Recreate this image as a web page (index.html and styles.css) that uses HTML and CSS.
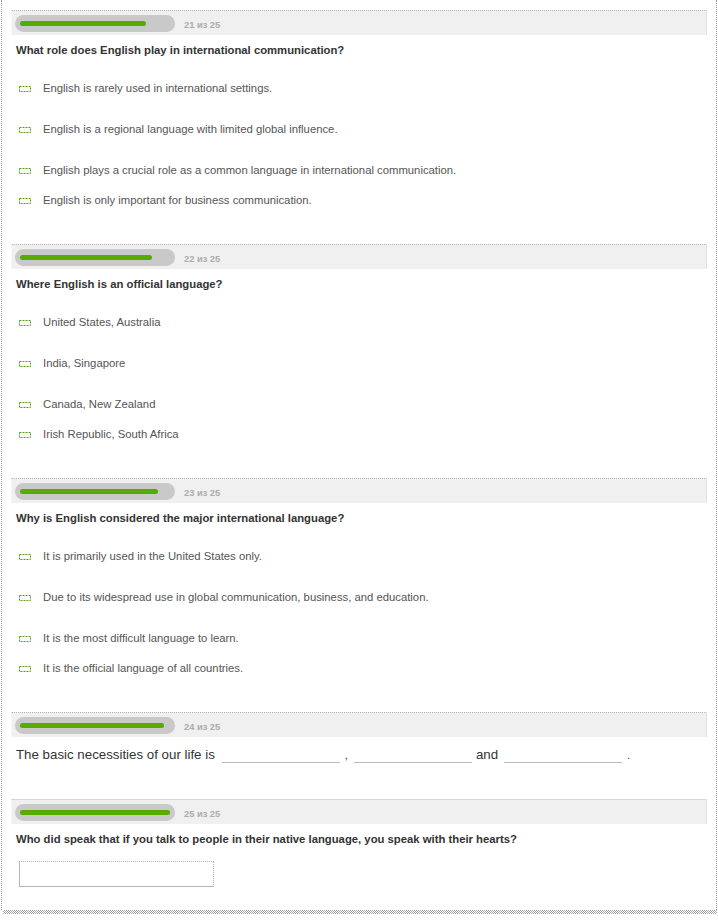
FILE: index.html
```html
<!DOCTYPE html>
<html>
<head>
<meta charset="utf-8">
<link rel="stylesheet" href="styles.css">
</head>
<body>
<div class="page">
  <div class="quiz">
    <section class="task">
      <div class="bar"><div class="track"><div class="fill" style="width:126px"></div></div><span class="count">21 из 25</span></div>
      <p class="q">What role does English play in international communication?</p>
      <ul class="opts">
        <li><svg class="ico" viewBox="0 0 12 6"><rect x="0.5" y="0.5" width="11" height="5" fill="none" stroke="#5a9e12" stroke-dasharray="2 1"/></svg>English is rarely used in international settings.</li>
        <li><svg class="ico" viewBox="0 0 12 6"><rect x="0.5" y="0.5" width="11" height="5" fill="none" stroke="#5a9e12" stroke-dasharray="2 1"/></svg>English is a regional language with limited global influence.</li>
        <li><svg class="ico" viewBox="0 0 12 6"><rect x="0.5" y="0.5" width="11" height="5" fill="none" stroke="#5a9e12" stroke-dasharray="2 1"/></svg>English plays a crucial role as a common language in international communication.</li>
        <li><svg class="ico" viewBox="0 0 12 6"><rect x="0.5" y="0.5" width="11" height="5" fill="none" stroke="#5a9e12" stroke-dasharray="2 1"/></svg>English is only important for business communication.</li>
      </ul>
    </section>
    <section class="task">
      <div class="bar"><div class="track"><div class="fill" style="width:132px"></div></div><span class="count">22 из 25</span></div>
      <p class="q">Where English is an official language?</p>
      <ul class="opts">
        <li><svg class="ico" viewBox="0 0 12 6"><rect x="0.5" y="0.5" width="11" height="5" fill="none" stroke="#5a9e12" stroke-dasharray="2 1"/></svg>United States, Australia</li>
        <li><svg class="ico" viewBox="0 0 12 6"><rect x="0.5" y="0.5" width="11" height="5" fill="none" stroke="#5a9e12" stroke-dasharray="2 1"/></svg>India, Singapore</li>
        <li><svg class="ico" viewBox="0 0 12 6"><rect x="0.5" y="0.5" width="11" height="5" fill="none" stroke="#5a9e12" stroke-dasharray="2 1"/></svg>Canada, New Zealand</li>
        <li><svg class="ico" viewBox="0 0 12 6"><rect x="0.5" y="0.5" width="11" height="5" fill="none" stroke="#5a9e12" stroke-dasharray="2 1"/></svg>Irish Republic, South Africa</li>
      </ul>
    </section>
    <section class="task">
      <div class="bar"><div class="track"><div class="fill" style="width:138px"></div></div><span class="count">23 из 25</span></div>
      <p class="q">Why is English considered the major international language?</p>
      <ul class="opts">
        <li><svg class="ico" viewBox="0 0 12 6"><rect x="0.5" y="0.5" width="11" height="5" fill="none" stroke="#5a9e12" stroke-dasharray="2 1"/></svg>It is primarily used in the United States only.</li>
        <li><svg class="ico" viewBox="0 0 12 6"><rect x="0.5" y="0.5" width="11" height="5" fill="none" stroke="#5a9e12" stroke-dasharray="2 1"/></svg>Due to its widespread use in global communication, business, and education.</li>
        <li><svg class="ico" viewBox="0 0 12 6"><rect x="0.5" y="0.5" width="11" height="5" fill="none" stroke="#5a9e12" stroke-dasharray="2 1"/></svg>It is the most difficult language to learn.</li>
        <li><svg class="ico" viewBox="0 0 12 6"><rect x="0.5" y="0.5" width="11" height="5" fill="none" stroke="#5a9e12" stroke-dasharray="2 1"/></svg>It is the official language of all countries.</li>
      </ul>
    </section>
    <section class="task fill-task">
      <div class="bar"><div class="track"><div class="fill" style="width:144px"></div></div><span class="count">24 из 25</span></div>
      <p class="sentence">The basic necessities of our life is <span class="blank first"></span><span class="punct">,</span><span class="blank"></span><span class="word">and</span><span class="blank"></span><span class="punct">.</span></p>
    </section>
    <section class="task last">
      <div class="bar solid"><div class="track"><div class="fill" style="width:150px"></div></div><span class="count">25 из 25</span></div>
      <p class="q">Who did speak that if you talk to people in their native language, you speak with their hearts?</p>
      <div class="answer"></div>
    </section>
  </div>
  <div class="edge"></div>
</div>
</body>
</html>
```
FILE: styles.css
```css
html, body {
  margin: 0;
  padding: 0;
  background: #fff;
}
body {
  font-family: "Liberation Sans", Arial, sans-serif;
  color: #333;
}
.page {
  width: 716px;
  margin-left: 1px;
}
.quiz {
  border-left: 1px dotted #999;
  border-right: 1px dotted #999;
  padding: 10px 9px 23px 9px;
}
.edge {
  height: 4px;
  margin-left: 2px;
  background-color: #fff;
  background-image: conic-gradient(#aaa 25%, #fff 25% 50%, #aaa 50% 75%, #fff 75%);
  background-size: 2px 2px;
}
.task {
  padding-bottom: 37px;
}
.task.fill-task {
  padding-bottom: 35px;
}
.task.last {
  padding-bottom: 0;
}
.bar {
  height: 24px;
  background: #f0f0f0;
  border-top: 1px dotted #b5b5b5;
  border-right: 1px solid #e2e2e2;
  border-left: 1px solid #f6f6f6;
  display: flex;
  align-items: center;
  padding-left: 3px;
}
.bar.solid {
  border-top: 1px solid #d6d6d6;
}
.track {
  width: 150px;
  height: 7px;
  padding: 5px;
  background: #c9c9c9;
  border-radius: 9px;
  display: flex;
  align-items: center;
}
.fill {
  height: 5px;
  background: #56aa00;
  border-radius: 3px;
}
.count {
  margin-left: 9px;
  margin-top: 3px;
  font-size: 9.3px;
  font-weight: bold;
  color: #acacac;
}
.q {
  margin: 8px 0 0 5px;
  font-size: 11.3px;
  line-height: 14px;
  font-weight: bold;
  color: #333;
}
.opts {
  list-style: none;
  margin: 24px 0 0 0;
  padding: 0 0 0 8px;
  display: flex;
  flex-direction: column;
}
.opts li {
  display: flex;
  align-items: center;
  font-size: 11.3px;
  line-height: 14px;
  color: #555;
}
.opts li:nth-child(2),
.opts li:nth-child(3) {
  margin-top: 27px;
}
.opts li:nth-child(4) {
  margin-top: 16px;
}
.ico {
  width: 12px;
  height: 6px;
  margin-right: 12px;
  margin-top: 2px;
  flex: none;
}
.sentence {
  margin: 9px 0 0 5px;
  font-size: 13.3px;
  line-height: 18px;
  color: #333;
  display: flex;
  align-items: flex-end;
}
.blank {
  display: inline-block;
  width: 118px;
  height: 15px;
  border-bottom: 1px solid #bbb;
  margin-left: 6px;
  margin-bottom: 1px;
}
.blank.first {
  margin-left: 7px;
}
.punct {
  margin-left: 5px;
  font-size: 11px;
}
.word {
  margin-left: 4px;
}
.answer {
  margin: 15px 0 0 8px;
  width: 193px;
  height: 24px;
  border: 1px solid #b5b5b5;
  border-right: 1px dotted #b5b5b5;
  border-top: 1px dotted #b5b5b5;
}
```
